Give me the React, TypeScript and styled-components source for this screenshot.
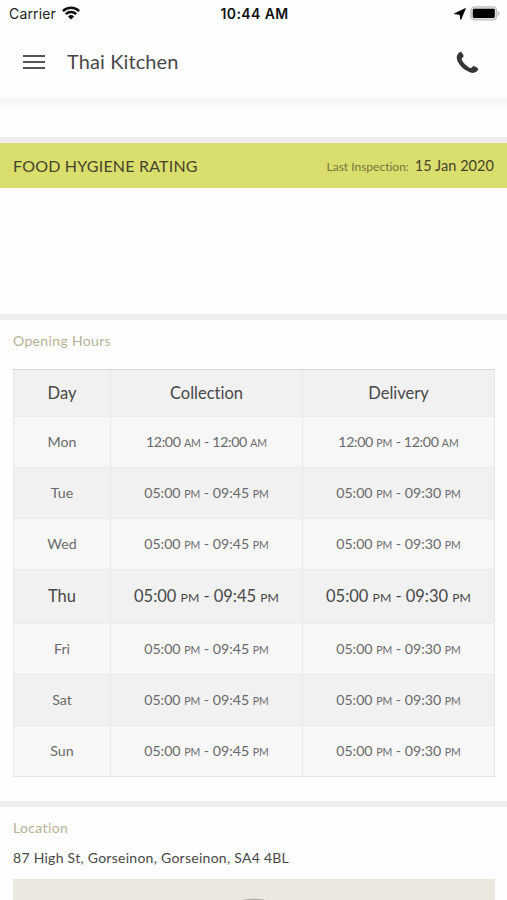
import React from 'react';
import styled, { createGlobalStyle } from 'styled-components';

const GlobalStyle = createGlobalStyle`
  * { box-sizing: border-box; }
  html, body { margin: 0; background: #fff; overflow: hidden; }
  body {
    font-family: Lato, "Open Sans", sans-serif;
    font-variant-ligatures: none;
    color: #484848;
  }
`;

const Screen = styled.div`
  width: 507px;
  height: 900px;
  overflow: hidden;
  display: flex;
  flex-direction: column;
  background: #fefefe;
`;

const StatusBar = styled.div`
  height: 27px;
  flex: none;
  display: grid;
  grid-template-columns: 1fr auto 1fr;
  align-items: center;
  padding: 0 7px 0 9px;
  font-family: Inter, sans-serif;
  color: #111;
`;

const Carrier = styled.div`
  display: flex;
  align-items: center;
  gap: 6px;
  font-size: 14px;
  letter-spacing: 0.15px;
  color: #222;
  svg { margin-top: -2px; }
`;

const Clock = styled.div`
  font-size: 14px;
  font-weight: 600;
  letter-spacing: 0.4px;
`;

const Indicators = styled.div`
  display: flex;
  justify-content: flex-end;
  align-items: center;
  gap: 4px;
  svg { display: block; }
`;

const AppBar = styled.header`
  height: 71px;
  flex: none;
  display: flex;
  align-items: center;
  padding: 0 28px 1px 23px;
`;

const Title = styled.h1`
  flex: 1;
  margin: -2px 0 0 22px;
  font-size: 20px;
  font-weight: 400;
  letter-spacing: 0.1px;
`;

const Shade = styled.div`
  height: 39px;
  flex: none;
  background: linear-gradient(#f6f6f6 0, #f8f8f8 5px, #fdfdfd 9px, #fefefe 12px);
`;

const Divider = styled.div<{ $tone?: string }>`
  height: 6px;
  flex: none;
  background: ${(p) => p.$tone ?? '#eeeeee'};
`;

const Rating = styled.section`
  height: 45px;
  flex: none;
  display: flex;
  align-items: center;
  justify-content: space-between;
  padding: 0 13px 1px;
  background: #dade6c;
  color: #46432c;
`;

const RatingTitle = styled.h2`
  margin: 0;
  font-size: 16px;
  font-weight: 400;
  letter-spacing: 0.2px;
`;

const Inspection = styled.div`
  display: flex;
  align-items: baseline;
  gap: 6px;
`;

const InspectionLabel = styled.span`
  font-size: 12px;
  color: #77743f;
`;

const InspectionDate = styled.span`
  font-size: 14.5px;
  letter-spacing: 0.05px;
`;

const RatingBody = styled.div`
  height: 126px;
  flex: none;
`;

const Section = styled.section<{ $height?: number }>`
  flex: none;
  height: ${(p) => (p.$height ? `${p.$height}px` : 'auto')};
  padding: 11px 13px 0;
`;

const SectionTitle = styled.h3`
  margin: 0;
  font-size: 14px;
  line-height: 20px;
  font-weight: 400;
  letter-spacing: 0.35px;
  color: #b9b294;
`;

const Hours = styled.div`
  margin-top: 18px;
  width: 482px;
  border: 1px solid #e7e7e7;
  border-top: 1px solid #d6d6d6;
`;

const Row = styled.div<{ $height: number; $kind: 'head' | 'odd' | 'even' | 'today' }>`
  display: grid;
  grid-template-columns: 96px 192px 1fr;
  height: ${(p) => p.$height}px;
  background: ${(p) => (p.$kind === 'odd' ? '#f7f7f7' : '#f1f1f1')};
  color: ${(p) => (p.$kind === 'head' || p.$kind === 'today' ? '#484848' : '#6a6a6a')};
  font-size: ${(p) => (p.$kind === 'head' || p.$kind === 'today' ? 16.5 : 14.2)}px;
  & + & { border-top: 1px solid #ebebeb; }
`;

const Cell = styled.div`
  display: flex;
  align-items: center;
  justify-content: center;
  padding-bottom: 1px;
  white-space: pre;
  & + & { border-left: 1px solid #e7e7e7; }
`;

const Range = styled.span<{ $tight: boolean }>`
  letter-spacing: ${(p) => (p.$tight ? '-0.35px' : '-0.02px')};
`;

const Meridiem = styled.small`
  font-size: 0.74em;
  letter-spacing: 0;
`;

const Address = styled.p`
  margin: 10px 0 11px;
  font-size: 14px;
  line-height: 20px;
  letter-spacing: 0.27px;
`;

const MapPreview = styled.div`
  width: 482px;
  height: 21px;
  overflow: hidden;
  display: flex;
  align-items: flex-end;
  justify-content: center;
  background: #eae8df;
  svg { display: block; }
`;

type Span = [string, string, string, string];
type Day = { name: string; height: number; collection: Span; delivery: Span; today?: boolean };

const evening = (end: string): Span => ['05:00', 'PM', end, 'PM'];

const days: Day[] = [
  { name: 'Mon', height: 51, collection: ['12:00', 'AM', '12:00', 'AM'], delivery: ['12:00', 'PM', '12:00', 'AM'] },
  { name: 'Tue', height: 51, collection: evening('09:45'), delivery: evening('09:30') },
  { name: 'Wed', height: 51, collection: evening('09:45'), delivery: evening('09:30') },
  { name: 'Thu', height: 54, collection: evening('09:45'), delivery: evening('09:30'), today: true },
  { name: 'Fri', height: 51, collection: evening('09:45'), delivery: evening('09:30') },
  { name: 'Sat', height: 51, collection: evening('09:45'), delivery: evening('09:30') },
  { name: 'Sun', height: 51, collection: evening('09:45'), delivery: evening('09:30') },
];

const TimeSpan = ({ value: [from, a, to, b] }: { value: Span }) => (
  <Range $tight={from === '12:00'}>
    {from} <Meridiem>{a}</Meridiem> - {to} <Meridiem>{b}</Meridiem>
  </Range>
);

const Wifi = () => (
  <svg width="18" height="14" viewBox="0 0 18 14" fill="none" stroke="#111" strokeWidth="2.5">
    <path d="M0.9 5.2a11.5 11.5 0 0 1 16.2 0" />
    <path d="M3.8 8.2a7.4 7.4 0 0 1 10.4 0" />
    <path d="M9 13.6 5.9 10.4a4.5 4.5 0 0 1 6.2 0Z" fill="#111" stroke="none" />
  </svg>
);

const LocationArrow = () => (
  <svg width="12" height="12" viewBox="0 0 12 12">
    <path d="M11.4 0.6 6.8 11.3 6 6.4 0.5 5.7Z" fill="#000" stroke="#000" strokeWidth="0.9" strokeLinejoin="round" />
  </svg>
);

const Battery = () => (
  <svg width="30" height="15" viewBox="0 0 30 15">
    <rect x="0.9" y="0.9" width="25.8" height="13" rx="3.8" fill="#e0e0e0" stroke="#bdbdbd" strokeWidth="1.3" />
    <rect x="2.8" y="2.8" width="22" height="9.2" rx="1.4" fill="#000" />
    <path d="M28 5v5c2.2-.8 2.2-4.2 0-5Z" fill="#bdbdbd" />
  </svg>
);

const MenuIcon = () => (
  <svg width="22" height="16" viewBox="0 0 22 16" stroke="#555" strokeWidth="1.8">
    <path d="M0 2h22M0 8h22M0 14h22" />
  </svg>
);

const PhoneIcon = () => (
  <svg width="23" height="23" viewBox="0 0 23 23" fill="#363636">
    <path d="M1.7 3.2C2.5 1.9 3.7.8 4.7.7c.8 0 2.9 3.4 3 4.4 0 1.1-2.1 1.8-2.1 3.1 0 2 6.9 8.9 9.1 8.9 1.4 0 1.9-2.1 3.1-2.1 1 .1 4.4 2.3 4.5 3.1 0 1-1.3 2.3-2.5 3-1.9 1.2-4.6 1.2-8-.8C7.100 18.100 3.300 14 1.600 10.200.500 7.500.400 5.100 1.700 3.200Z" />
  </svg>
);

const Marker = () => (
  <svg width="48" height="2" viewBox="0 0 48 2">
    <ellipse cx="24" cy="8" rx="21" ry="7.3" fill="#b5b0aa" />
  </svg>
);

export default function App() {
  return (
    <>
      <GlobalStyle />
      <Screen>
        <StatusBar>
          <Carrier>Carrier<Wifi /></Carrier>
          <Clock>10:44 AM</Clock>
          <Indicators><LocationArrow /><Battery /></Indicators>
        </StatusBar>
        <AppBar>
          <MenuIcon />
          <Title>Thai Kitchen</Title>
          <PhoneIcon />
        </AppBar>
        <Shade />
        <Divider $tone="#f0eeee" />
        <Rating>
          <RatingTitle>FOOD HYGIENE RATING</RatingTitle>
          <Inspection>
            <InspectionLabel>Last Inspection:</InspectionLabel>
            <InspectionDate>15 Jan 2020</InspectionDate>
          </Inspection>
        </Rating>
        <RatingBody />
        <Divider />
        <Section $height={481}>
          <SectionTitle>Opening Hours</SectionTitle>
          <Hours>
            <Row $height={46} $kind="head">
              <Cell>Day</Cell>
              <Cell>Collection</Cell>
              <Cell>Delivery</Cell>
            </Row>
            {days.map((d, i) => (
              <Row key={d.name} $height={d.height} $kind={d.today ? 'today' : i % 2 ? 'even' : 'odd'}>
                <Cell>{d.name}</Cell>
                <Cell><TimeSpan value={d.collection} /></Cell>
                <Cell><TimeSpan value={d.delivery} /></Cell>
              </Row>
            ))}
          </Hours>
        </Section>
        <Divider />
        <Section>
          <SectionTitle>Location</SectionTitle>
          <Address>87 High St, Gorseinon, Gorseinon, SA4 4BL</Address>
          <MapPreview><Marker /></MapPreview>
        </Section>
      </Screen>
    </>
  );
}
